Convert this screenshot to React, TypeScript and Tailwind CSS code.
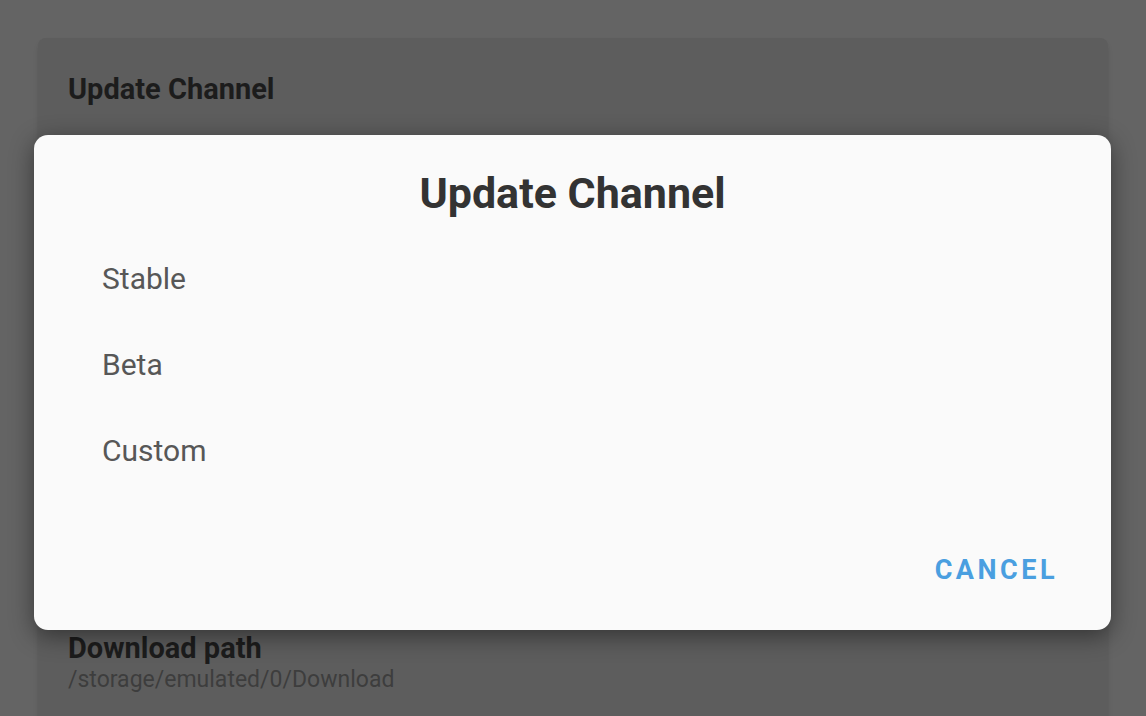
export default function App() {
  const options = ["Stable", "Beta", "Custom"];

  return (
    <div
      className="relative w-[1146px] h-[716px] overflow-hidden bg-[#646464]"
      style={{ fontFamily: "Roboto, 'Noto Sans', sans-serif" }}
    >
      {/* settings card (dimmed behind the dialog) */}
      <div className="mx-[38px] mt-[38px] h-[700px] rounded-lg bg-[#5d5d5d] px-[30px] pt-[36px] shadow-md">
        <div className="text-[29px] leading-[30px] font-bold text-[#1c1c1c]">Update Channel</div>
        <div className="h-[529px]" />
        <div className="text-[29px] leading-[30px] font-bold text-[#1c1c1c]">Download path</div>
        <div className="mt-[3px] text-[23px] leading-[28px] text-[#3d3d3d]">/storage/emulated/0/Download</div>
      </div>

      {/* dialog */}
      <div className="absolute left-[34px] top-[135px] flex h-[495px] w-[1077px] flex-col rounded-[14px] bg-[#fafafa] shadow-[0_6px_24px_rgba(0,0,0,0.45)]">
        <h2 className="pt-[34px] text-center text-[43px] leading-[48px] font-bold text-[#333333]">
          Update Channel
        </h2>
        <div className="mt-[18px] flex flex-col">
          {options.map((o) => (
            <div key={o} className="flex h-[86px] items-center pl-[68px] text-[30px] text-[#575757]">
              {o}
            </div>
          ))}
        </div>
        <div className="flex-1" />
        <div className="flex h-[60px] items-center justify-end pr-[53px] mb-[30px]">
          <span className="text-[27px] font-bold tracking-[3.5px] text-[#4a9fe0]">CANCEL</span>
        </div>
      </div>
    </div>
  );
}
